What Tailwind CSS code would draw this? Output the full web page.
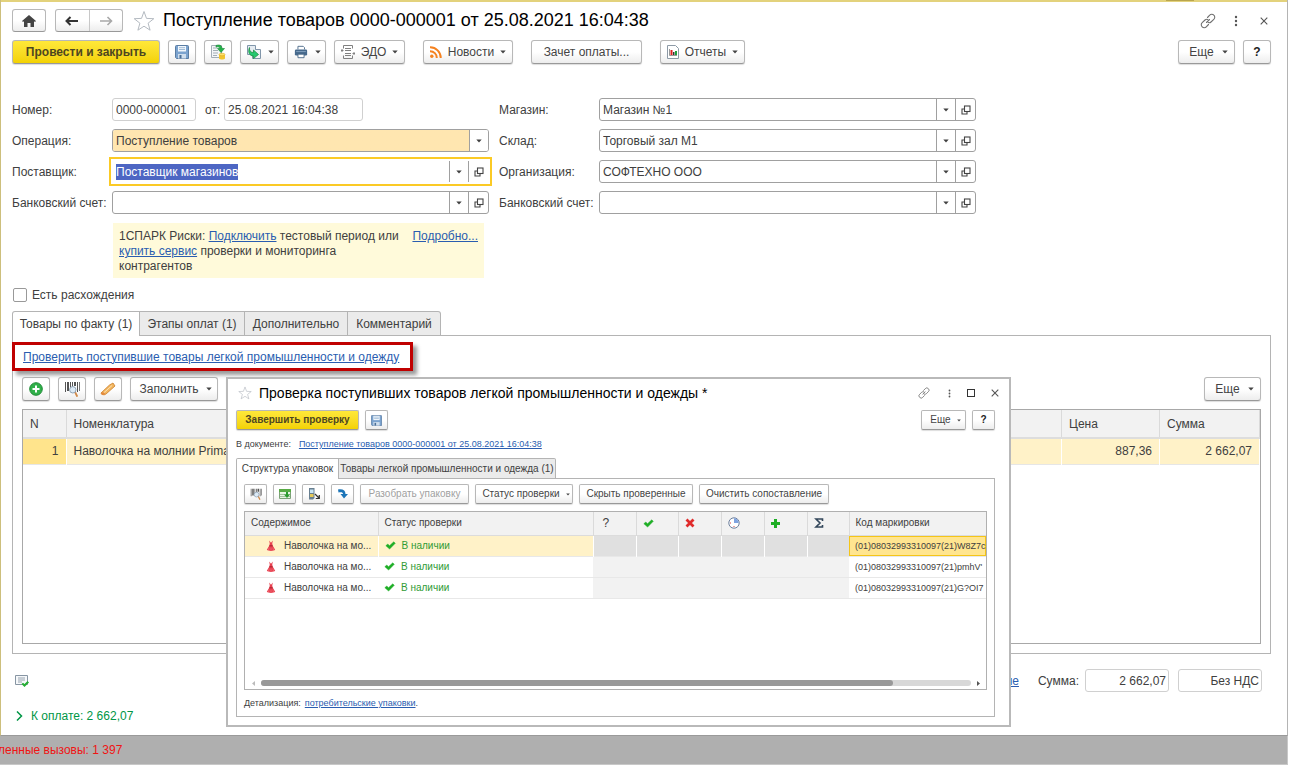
<!DOCTYPE html>
<html lang="ru">

<head>
    <meta charset="UTF-8">
    <meta name="viewport" content="width=device-width, initial-scale=1.0">
    <title>Поступление товаров</title>
    <script src="https://cdn.jsdelivr.net/npm/@tailwindcss/browser@4"></script>
</head>

<body class="bg-white font-['Liberation_Sans',Arial,sans-serif] text-[12px] leading-4 text-[#404040]">

    <!-- Иконки -->
    <svg class="hidden">
        <symbol id="i-caret" viewBox="0 0 6 4"><path d="M.3.5h5.400L3 3.500z" fill="currentColor" /></symbol>
        <symbol id="i-star" viewBox="0 0 22 22"><path d="M11 1.500l2.500 6.900 7.300.3-5.700 4.500 2 7-6.100-4-6.100 4 2-7L1.200 8.700l7.300-.3z" fill="#fff" stroke="#b4bac1" stroke-width="1" /></symbol>
        <symbol id="i-link" viewBox="0 0 16 16"><g fill="none" stroke="#707070" stroke-width="1.100" stroke-linecap="round"><path d="M7.500 4.500l2.200-2.300a2.700 2.700 0 0 1 4.100 0 2.700 2.700 0 0 1 0 4.100L11 9a2.700 2.700 0 0 1-2.800.6" /><path d="M8.500 11.500l-2.200 2.300a2.700 2.700 0 0 1-4.100 0 2.700 2.700 0 0 1 0-4.100L5 7a2.700 2.700 0 0 1 2.800-.6" /><path d="M6.500 9.500l3-3" /></g></symbol>
        <symbol id="i-dots" viewBox="0 0 4 12"><g fill="#555"><circle cx="2" cy="2" r="1.200" /><circle cx="2" cy="6" r="1.200" /><circle cx="2" cy="10" r="1.200" /></g></symbol>
        <symbol id="i-close" viewBox="0 0 8 8"><path d="M.7.7l6.600 6.600M7.300.7L.7 7.300" stroke="#555" stroke-width="1.100" fill="none" /></symbol>
        <symbol id="i-open" viewBox="0 0 10 10"><g fill="none" stroke="#444" stroke-width="1.100"><rect x="3.500" y="1" width="5.500" height="5.500" /><path d="M3.500 4H1v5h5V6.500" /></g></symbol>
        <symbol id="i-save" viewBox="0 0 14 14"><path d="M.5 1.500a1 1 0 0 1 1-1h11a1 1 0 0 1 1 1v12h-12l-1-1z" fill="#7ba3cf" stroke="#5a7da3" /><rect x="3" y="1" width="8" height="5.500" fill="#f2f7fc" /><path d="M4 2.700h6M4 4.500h6" stroke="#9fbbd6" /><rect x="3" y="9" width="8" height="4.500" fill="#cfdeed" /><rect x="4.500" y="10" width="2" height="3.500" fill="#4a6f98" /></symbol>
        <symbol id="i-scan" viewBox="0 0 16 16"><g fill="#555"><path d="M1 1h1v10H1zM3 1h2v9H3zM6 1h1v7H6zM8 1h1v5H8zM10 1h2v4h-2zM13 1h1v10h-1zM15 1h.8v9H15z" /></g><path d="M11 11l2 4" stroke="#d08a4a" stroke-width="1.800" stroke-linecap="round" /><circle cx="8.800" cy="8.800" r="3.200" fill="#dceaf6" stroke="#8fa3b5" /></symbol>
        <symbol id="i-check" viewBox="0 0 12 10"><path d="M.8 5.200L3 3.300l1.900 1.900L9.600.9l1.700 1.700L5 9z" fill="#1eae25" stroke="#1eae25" stroke-width=".5" stroke-linejoin="round" /></symbol>
        <symbol id="i-dress" viewBox="0 0 12 14"><path d="M3.800.5L4.500 4l-.5 2.500L1 11.500c1.500 1.800 8.500 1.800 10 0L8 6.500 7.500 4 8.200.5 6 3.200z" fill="#e8404f" /><path d="M4 6.200h4v1.200H4z" fill="#a02230" /><path d="M3.800 9l-1 3M6 9v3.500M8.200 9l1 3" stroke="#f27883" stroke-width=".7" /></symbol>
    </svg>

    <div class="flex min-h-screen flex-col">

        <!-- Основная форма -->
        <main class="relative mr-px flex flex-1 flex-col border-r border-b border-l border-r-[#b4b4b4] border-b-[#9a9a9a] border-l-[#cdbf7c]">
            <div class="flex h-0.5 justify-end bg-[#e3d27c] pr-[93px]"><i class="h-px w-7 bg-[#b9a54e]"></i></div>

            <div class="flex flex-1 flex-col pt-[7px] pr-4 pb-[11px] pl-[11px]">

                <!-- Заголовок -->
                <header class="flex h-[23px] items-center">
                    <button aria-label="Домой" class="flex h-full w-[34px] items-center justify-center rounded-[3px] border border-[#b8b8b8] border-b-[#999] bg-linear-to-b from-white from-50% to-[#ededed]">
                        <svg class="h-3 w-3.5" viewBox="0 0 14 12"><path d="M7 0l7 6-1 1-1-.8V12H8.500V8h-3v4H2V6.200L1 7 0 6z" fill="#444" /></svg>
                    </button>
                    <div class="ml-[9px] flex h-full w-[68px] rounded-[3px] border border-[#b8b8b8] border-b-[#999] bg-linear-to-b from-white from-50% to-[#ededed]">
                        <button aria-label="Назад" class="flex flex-1 items-center justify-center border-r border-[#c8c8c8]">
                            <svg class="h-2.5 w-3.5" viewBox="0 0 14 10"><path d="M13 5H2M5.500 1L1.500 5l4 4" stroke="#333" stroke-width="2" fill="none" /></svg>
                        </button>
                        <button aria-label="Вперед" class="flex flex-1 items-center justify-center">
                            <svg class="h-2.5 w-3.5" viewBox="0 0 14 10"><path d="M1 5h11M8.500 1l4 4-4 4" stroke="#a8a8a8" stroke-width="1.600" fill="none" /></svg>
                        </button>
                    </div>
                    <button aria-label="В избранное" class="ml-2.5"><svg class="size-[22px]"><use href="#i-star" /></svg></button>
                    <h1 class="ml-2 text-[18px] leading-[23px] text-black">Поступление товаров 0000-000001 от 25.08.2021 16:04:38</h1>
                    <div class="ml-auto flex items-center gap-[18px] pr-[3px]">
                        <button aria-label="Ссылка"><svg class="size-4"><use href="#i-link" /></svg></button>
                        <button aria-label="Меню"><svg class="h-3 w-1"><use href="#i-dots" /></svg></button>
                        <button aria-label="Закрыть" class="ml-1"><svg class="size-2"><use href="#i-close" /></svg></button>
                    </div>
                </header>

                <!-- Командная панель -->
                <div class="mt-2 flex h-6 gap-2 text-[#444] *:rounded-[3px] *:border *:border-[#b8b8b8] *:border-b-[#999] *:shadow-[0_1px_1px_#ddd]">
                    <button class="w-[148px] border-[#b79c10] bg-linear-to-b from-[#ffe838] to-[#f3d200] font-bold text-[#4d4620]">Провести и закрыть</button>
                    <button aria-label="Записать" class="flex w-7 items-center justify-center bg-linear-to-b from-white from-50% to-[#ededed]"><svg class="size-3.5"><use href="#i-save" /></svg></button>
                    <button aria-label="Провести" class="flex w-7 items-center justify-center bg-linear-to-b from-white from-50% to-[#ededed]">
                        <svg class="size-4" viewBox="0 0 16 16"><path d="M1.500 1.500h10v12h-10z" fill="#f4f6f8" stroke="#a3adb6" /><path d="M3 4h4M3 6.500h5M3 9h5M3 11.500h4" stroke="#a3adb6" /><path d="M6 1.500c4-1.500 6 .5 6 3h2.500L11 8.500 7.500 4.500H10C9.500 3 8 2.500 6 3z" fill="#25b34b" stroke="#158a35" stroke-width=".6" /><path d="M9 10.500v4c1 1.400 5 1.400 6 0v-4" fill="#f2c530" /><ellipse cx="12" cy="10.500" rx="3" ry="1.300" fill="#ffe16b" stroke="#d7a318" stroke-width=".5" /></svg>
                    </button>
                    <button aria-label="Создать на основании" class="flex w-[39px] items-center justify-center gap-1.5 bg-linear-to-b from-white from-50% to-[#ededed]">
                        <svg class="size-4" viewBox="0 0 16 16"><path d="M1.500 1.500h8v9h-8z" fill="#e6ecf2" stroke="#8196aa" /><path d="M9.500 5.500h5v9h-8v-4" fill="#eef2f6" stroke="#8196aa" /><path d="M3.500 3.500C3 7 5 8.500 7.500 8.500V6l5 4.500-5 4V12C3.500 12 1.500 8 3.500 3.500z" fill="#25c870" stroke="#128a3a" stroke-width=".7" /></svg>
                        <svg class="h-1 w-1.5"><use href="#i-caret" /></svg>
                    </button>
                    <button aria-label="Печать" class="flex w-[39px] items-center justify-center gap-1.5 bg-linear-to-b from-white from-50% to-[#ededed]">
                        <svg class="h-3.5 w-4" viewBox="0 0 16 16"><path d="M4.500 5V1.500h6l1.500 1.500v2" fill="#fff" stroke="#456585" /><rect x="1" y="5" width="14" height="7" rx="1.500" fill="#46698c" /><path d="M2.500 7.500h11" stroke="#89a7c4" /><path d="M4.500 10.500h7v4h-7z" fill="#fff" stroke="#456585" /></svg>
                        <svg class="h-1 w-1.5"><use href="#i-caret" /></svg>
                    </button>
                    <button class="flex w-[71px] items-center justify-center gap-1.5 bg-linear-to-b from-white from-50% to-[#ededed]">
                        <svg class="size-3.5" viewBox="0 0 14 14"><path d="M2.500 3.500v-3h9v3M2.500 10.500v3h9v-3M4 3.500h6M4 5.500h6M4 8.500h6M4 10.500h6M0 5.500h2.500M1.500 4L0 5.500 1.500 7M11.500 8.500H14M12.500 7L14 8.500 12.500 10" fill="none" stroke="#808080" /></svg>
                        ЭДО
                        <svg class="h-1 w-1.5"><use href="#i-caret" /></svg>
                    </button>
                    <button class="ml-2.5 flex w-[90px] items-center justify-center gap-1.5 bg-linear-to-b from-white from-50% to-[#ededed]">
                        <svg class="size-3" viewBox="0 0 12 12"><g fill="none" stroke="#f58220" stroke-width="2"><path d="M0 1.300A10.500 10.500 0 0 1 10.700 12M0 5.200A6.700 6.700 0 0 1 6.800 12" /></g><circle cx="1.800" cy="10.200" r="1.700" fill="#f58220" /></svg>
                        Новости
                        <svg class="h-1 w-1.5"><use href="#i-caret" /></svg>
                    </button>
                    <button class="ml-2.5 w-[111px] bg-linear-to-b from-white from-50% to-[#ededed]">Зачет оплаты...</button>
                    <button class="ml-2.5 flex w-[85px] items-center justify-center gap-1.5 bg-linear-to-b from-white from-50% to-[#ededed]">
                        <svg class="h-3.5 w-3" viewBox="0 0 12 14"><path d="M.5.500h8l3 3v10H.5z" fill="#fff" stroke="#8d9aa6" /><path d="M2.500 4v6.500H10" stroke="#999" fill="none" /><path d="M3.500 5h2v5h-2z" fill="#e02020" /><path d="M6 7h1.500v3H6z" fill="#333" /><path d="M8 6h2v4H8z" fill="#1fa03a" /></svg>
                        Отчеты
                        <svg class="h-1 w-1.5"><use href="#i-caret" /></svg>
                    </button>
                    <button class="ml-auto flex w-[57px] items-center justify-center gap-2 bg-linear-to-b from-white from-50% to-[#ededed] pl-1">Еще <svg class="h-1 w-1.5"><use href="#i-caret" /></svg></button>
                    <button aria-label="Справка" class="w-7 bg-linear-to-b from-white from-50% to-[#ededed] font-bold text-[#222]">?</button>
                </div>

                <!-- Реквизиты -->
                <div class="mt-[34px] grid grid-cols-[477px_477px] items-start gap-x-2.5">
                    <div class="flex flex-col gap-2">
                        <div class="flex h-[23px] items-center">
                            <label for="number" class="w-[100px]">Номер:</label>
                            <input id="number" value="0000-000001" class="h-full w-[84px] rounded-[3px] border border-[#d0d0d0] px-[3px]">
                            <label for="date" class="w-7 pl-[9px]">от:</label>
                            <input id="date" value="25.08.2021 16:04:38" class="h-full w-[139px] rounded-[3px] border border-[#d0d0d0] px-[3px]">
                        </div>
                        <div class="flex h-[23px] items-center">
                            <label for="operation" class="w-[100px]">Операция:</label>
                            <div class="relative flex h-full flex-1 rounded-[3px] border border-[#a0a0a0]">
                                <select id="operation" class="flex-1 appearance-none rounded-[2px] bg-linear-to-l from-white from-[18px] to-[#ffe6b0] to-[18px] px-[3px]">
                                    <option>Поступление товаров</option>
                                </select>
                                <span class="pointer-events-none absolute inset-y-0 right-0 flex w-[19px] items-center justify-center border-l border-[#a0a0a0]"><svg class="h-1 w-1.5"><use href="#i-caret" /></svg></span>
                            </div>
                        </div>
                        <div class="flex h-[23px] items-center">
                            <label for="supplier" class="w-[100px]">Поставщик:</label>
                            <div class="flex h-full flex-1 border border-white outline-2 outline-offset-1 outline-[#fbca25]">
                                <input id="supplier" value="Поставщик магазинов" class="min-w-0 flex-1 px-[3px] outline-none selection:bg-[#4d66c3] selection:text-white">
                                <button aria-label="Выбрать" class="flex w-[19px] items-center justify-center border-l border-[#a0a0a0]"><svg class="h-1 w-1.5"><use href="#i-caret" /></svg></button>
                                <button aria-label="Открыть" class="flex w-5 items-center justify-center border-l border-[#a0a0a0]"><svg class="size-2.5"><use href="#i-open" /></svg></button>
                            </div>
                        </div>
                        <div class="flex h-[23px] items-center">
                            <label for="account" class="w-[100px] whitespace-nowrap">Банковский счет:</label>
                            <div class="flex h-full flex-1 rounded-[3px] border border-[#a0a0a0]">
                                <input id="account" class="min-w-0 flex-1 px-[3px] outline-none">
                                <button aria-label="Выбрать" class="flex w-[19px] items-center justify-center border-l border-[#a0a0a0]"><svg class="h-1 w-1.5"><use href="#i-caret" /></svg></button>
                                <button aria-label="Открыть" class="flex w-5 items-center justify-center border-l border-[#a0a0a0]"><svg class="size-2.5"><use href="#i-open" /></svg></button>
                            </div>
                        </div>

                        <!-- 1СПАРК Риски -->
                        <div class="mt-px ml-[101px] flex w-[371px] justify-between bg-[#fffada] pt-1.5 pr-1.5 pb-1 pl-1.5 leading-[15px]">
                            <p class="w-[285px]">1СПАРК Риски: <a href="#" class="text-[#2a5db0] underline">Подключить</a> тестовый период или <a href="#" class="text-[#2a5db0] underline">купить сервис</a> проверки и мониторинга<br>контрагентов</p>
                            <a href="#" class="text-[#2a5db0] underline">Подробно...</a>
                        </div>
                    </div>

                    <div class="flex flex-col gap-2">
                        <div class="flex h-[23px] items-center">
                            <label for="shop" class="w-[100px]">Магазин:</label>
                            <div class="flex h-full flex-1 rounded-[3px] border border-[#a0a0a0]">
                                <input id="shop" value="Магазин №1" class="min-w-0 flex-1 px-[3px] outline-none">
                                <button aria-label="Выбрать" class="flex w-[19px] items-center justify-center border-l border-[#a0a0a0]"><svg class="h-1 w-1.5"><use href="#i-caret" /></svg></button>
                                <button aria-label="Открыть" class="flex w-5 items-center justify-center border-l border-[#a0a0a0]"><svg class="size-2.5"><use href="#i-open" /></svg></button>
                            </div>
                        </div>
                        <div class="flex h-[23px] items-center">
                            <label for="store" class="w-[100px]">Склад:</label>
                            <div class="flex h-full flex-1 rounded-[3px] border border-[#a0a0a0]">
                                <input id="store" value="Торговый зал М1" class="min-w-0 flex-1 px-[3px] outline-none">
                                <button aria-label="Выбрать" class="flex w-[19px] items-center justify-center border-l border-[#a0a0a0]"><svg class="h-1 w-1.5"><use href="#i-caret" /></svg></button>
                                <button aria-label="Открыть" class="flex w-5 items-center justify-center border-l border-[#a0a0a0]"><svg class="size-2.5"><use href="#i-open" /></svg></button>
                            </div>
                        </div>
                        <div class="flex h-[23px] items-center">
                            <label for="org" class="w-[100px]">Организация:</label>
                            <div class="flex h-full flex-1 rounded-[3px] border border-[#a0a0a0]">
                                <input id="org" value="СОФТЕХНО ООО" class="min-w-0 flex-1 px-[3px] outline-none">
                                <button aria-label="Выбрать" class="flex w-[19px] items-center justify-center border-l border-[#a0a0a0]"><svg class="h-1 w-1.5"><use href="#i-caret" /></svg></button>
                                <button aria-label="Открыть" class="flex w-5 items-center justify-center border-l border-[#a0a0a0]"><svg class="size-2.5"><use href="#i-open" /></svg></button>
                            </div>
                        </div>
                        <div class="flex h-[23px] items-center">
                            <label for="orgaccount" class="w-[100px] whitespace-nowrap">Банковский счет:</label>
                            <div class="flex h-full flex-1 rounded-[3px] border border-[#a0a0a0]">
                                <input id="orgaccount" class="min-w-0 flex-1 px-[3px] outline-none">
                                <button aria-label="Выбрать" class="flex w-[19px] items-center justify-center border-l border-[#a0a0a0]"><svg class="h-1 w-1.5"><use href="#i-caret" /></svg></button>
                                <button aria-label="Открыть" class="flex w-5 items-center justify-center border-l border-[#a0a0a0]"><svg class="size-2.5"><use href="#i-open" /></svg></button>
                            </div>
                        </div>
                    </div>
                </div>

                <label class="mt-[9px] flex items-center gap-[5px] pl-px"><input type="checkbox" class="size-3.5 appearance-none rounded-[2px] border border-[#999] bg-white">Есть расхождения</label>

                <!-- Закладки -->
                <div class="z-10 mt-2 flex h-[25px] *:border-t *:border-r *:border-[#b4b4b4]">
                    <button class="w-[128px] rounded-tl-[3px] border-l bg-white">Товары по факту (1)</button>
                    <button class="w-[105px] border-b bg-[#ebebeb]">Этапы оплат (1)</button>
                    <button class="w-[103px] border-b bg-[#ebebeb]">Дополнительно</button>
                    <button class="w-[93px] rounded-tr-[3px] border-b bg-[#ebebeb]">Комментарий</button>
                </div>
                <section class="-mt-px flex flex-1 flex-col border border-[#b4b4b4] pt-1.5 pb-[9px]">
                    <div class="z-10 -ml-px flex h-[29px] w-[401px] items-center border-3 border-[#c00000] pl-2 shadow-[4px_4px_4px_#0006]">
                        <a href="#" class="text-[#2a5db0] underline">Проверить поступившие товары легкой промышленности и одежду</a>
                    </div>

                    <div class="mt-1.5 flex h-6 gap-2 px-[9px] text-[#444] *:rounded-[3px] *:border *:border-[#b8b8b8] *:border-b-[#999] *:bg-linear-to-b *:from-white *:from-50% *:to-[#ededed] *:shadow-[0_1px_1px_#ddd]">
                        <button aria-label="Добавить" class="flex w-7 items-center justify-center"><svg class="size-3.5" viewBox="0 0 14 14"><circle cx="7" cy="7" r="6.300" fill="#30b04a" stroke="#208a37" /><path d="M7 3.500v7M3.500 7h7" stroke="#fff" stroke-width="2" /></svg></button>
                        <button aria-label="Штрихкод" class="flex w-7 items-center justify-center"><svg class="size-4"><use href="#i-scan" /></svg></button>
                        <button aria-label="Изменить" class="flex w-7 items-center justify-center"><svg class="size-4" viewBox="0 0 16 16"><path d="M1 12L9.500 4l3.500-2 2 3-9 8c-1.500 1.300-5 1-5-1z" fill="#f3b65f" stroke="#c97f2c" stroke-width=".8" /><path d="M3.500 12L12 4.500" stroke="#fbe1b4" /><path d="M1 12c1-1.500 4-1 4 1.500-2 .8-4 .2-4-1.500z" fill="#e58a3d" /></svg></button>
                        <button class="flex w-[88px] items-center justify-center gap-2 pl-1">Заполнить <svg class="h-1 w-1.5"><use href="#i-caret" /></svg></button>
                        <button class="w-[60px]" aria-label="Подбор"></button>
                        <button class="ml-auto flex w-[57px] items-center justify-center gap-2 pl-1">Еще <svg class="h-1 w-1.5"><use href="#i-caret" /></svg></button>
                    </div>

                    <!-- Список товаров -->
                    <div class="mx-[9px] mt-2 flex-1 border border-[#a8a8a8]">
                        <table class="w-full table-fixed">
                            <colgroup>
                                <col class="w-[43px]">
                                <col>
                                <col class="w-[98px]">
                                <col class="w-[100px]">
                            </colgroup>
                            <thead>
                                <tr class="h-7 border-b-2 border-[#ddd] bg-[#f2f2f2] text-left *:border-r *:border-[#dadada] *:px-[7px] *:font-normal">
                                    <th>N</th>
                                    <th>Номенклатура</th>
                                    <th>Цена</th>
                                    <th>Сумма</th>
                                </tr>
                            </thead>
                            <tbody>
                                <tr class="h-[26px] border-b border-[#e6e6e6] bg-[#fff2c8] *:border-r *:border-white *:px-[7px]">
                                    <td class="bg-[#ffe48c] text-right">1</td>
                                    <td>Наволочка на молнии Primavelle</td>
                                    <td class="text-right">887,36</td>
                                    <td class="text-right">2 662,07</td>
                                </tr>
                            </tbody>
                        </table>
                    </div>
                </section>

                <!-- Итоги -->
                <div class="mt-[15px] flex h-[23px] items-center pr-[9px]">
                    <svg class="ml-[3px] size-3.5" viewBox="0 0 14 14"><path d="M.5 1.500h12v9H.500z" fill="#f6f8fa" stroke="#8795a3" /><path d="M3 4h7M3 6h7M3 8h4" stroke="#98a4b0" /><path d="M6.500 10l1.500-1.300L9.500 10 12.500 7 14 8.500 9.500 13z" fill="#25ad35" /></svg>
                    <a href="#" class="ml-auto text-[#2a5db0] underline">ые</a>
                    <label for="total" class="mr-1.5 ml-[19px]">Сумма:</label>
                    <input id="total" value="2 662,07" class="h-full w-[84px] rounded-[3px] border border-[#d0d0d0] px-0.5 text-right">
                    <input aria-label="НДС" value="Без НДС" class="ml-[9px] h-full w-[84px] rounded-[3px] border border-[#d0d0d0] px-0.5 text-right">
                </div>
                <button class="mt-4 flex items-center gap-2 pl-1 text-[#009646]">
                    <svg class="h-2.5 w-[7px]" viewBox="0 0 7 10"><path d="M1 .5L5.500 5 1 9.500" fill="none" stroke="#009646" stroke-width="1.500" /></svg>
                    К оплате: 2 662,07
                </button>
            </div>

            <!-- Окно проверки товаров -->
            <div role="dialog" aria-labelledby="check-title" class="absolute top-[377px] left-[225px] z-20 flex h-[350px] w-[785px] flex-col border-2 border-[#b9b9b9] bg-white px-2 pb-2 text-[10px] leading-3">
                <div class="mt-1 flex h-5 items-center">
                    <button aria-label="В избранное" class="pl-0.5"><svg class="size-3.5"><use href="#i-star" /></svg></button>
                    <h2 id="check-title" class="ml-[7px] text-[14px] leading-5 text-black">Проверка поступивших товаров легкой промышленности и одежды *</h2>
                    <div class="ml-auto flex items-center gap-4 pr-0.5">
                        <button aria-label="Ссылка" class="mr-0.5"><svg class="size-3"><use href="#i-link" /></svg></button>
                        <button aria-label="Меню"><svg class="h-[9px] w-[3px]"><use href="#i-dots" /></svg></button>
                        <button aria-label="Развернуть" class="size-2 border border-[#333]"></button>
                        <button aria-label="Закрыть"><svg class="size-2"><use href="#i-close" /></svg></button>
                    </div>
                </div>

                <div class="mt-[7px] flex h-5 gap-1.5 pr-[6px] text-[#444] *:rounded-[2px] *:border *:border-[#b8b8b8] *:border-b-[#999] *:shadow-[0_1px_1px_#ddd]">
                    <button class="w-[123px] border-[#b79c10] bg-linear-to-b from-[#ffe838] to-[#f3d200] font-bold text-[#4d4620]">Завершить проверку</button>
                    <button aria-label="Записать" class="flex w-[23px] items-center justify-center bg-linear-to-b from-white from-50% to-[#ededed]"><svg class="size-[11px]"><use href="#i-save" /></svg></button>
                    <button class="ml-auto flex w-[45px] items-center justify-center gap-1.5 bg-linear-to-b from-white from-50% to-[#ededed] pl-1">Еще <svg class="h-[3px] w-1"><use href="#i-caret" /></svg></button>
                    <button aria-label="Справка" class="w-[23px] bg-linear-to-b from-white from-50% to-[#ededed] font-bold text-[#222]">?</button>
                </div>

                <p class="mt-2 flex gap-2 text-[9px]">В документе: <a href="#" class="text-[#2a5db0] underline">Поступление товаров 0000-000001 от 25.08.2021 16:04:38</a></p>

                <div class="z-10 mt-2 flex h-[21px] *:border-t *:border-r *:border-[#b4b4b4]">
                    <button class="w-[103px] rounded-tl-[2px] border-l bg-white">Структура упаковок</button>
                    <button class="w-[217px] rounded-tr-[2px] border-b bg-[#ebebeb]">Товары легкой промышленности и одежда (1)</button>
                </div>
                <section class="-mt-px mr-1.5 flex flex-1 flex-col border border-[#b4b4b4] px-[7px] pt-[5px] pb-[7px]">
                    <div class="flex h-5 gap-1.5 text-[#444] *:rounded-[2px] *:border *:border-[#b8b8b8] *:border-b-[#999] *:bg-linear-to-b *:from-white *:from-50% *:to-[#ededed] *:shadow-[0_1px_1px_#ddd]">
                        <button aria-label="Штрихкод" class="flex w-[23px] items-center justify-center"><svg class="size-3"><use href="#i-scan" /></svg></button>
                        <button aria-label="Загрузить" class="flex w-[23px] items-center justify-center"><svg class="h-2.5 w-3" viewBox="0 0 12 10"><path d="M.5.500h11v9H.5z" fill="#e8f5e3" stroke="#7ba276" /><path d="M0 0h12v3H0z" fill="#58ab45" /><path d="M1 5.500h10M1 7.500h10" stroke="#a2c29b" /><path d="M7 3h2v2.500h2L8 9 5 5.500h2z" fill="#2a9b2f" /></svg></button>
                        <button aria-label="Терминал" class="flex w-[23px] items-center justify-center"><svg class="size-3" viewBox="0 0 12 12"><path d="M1 0h5.500v10L5 11.500H1z" fill="#687f90" /><path d="M2 1.500h3.500V5H2z" fill="#c9e6f7" /><path d="M2 6h3.500v3H2z" fill="#e5c95a" /><path d="M7 6l4 4M11.300 7v3.500H7.800" stroke="#333" stroke-width="1.200" fill="none" /></svg></button>
                        <button aria-label="Обновить" class="flex w-[23px] items-center justify-center"><svg class="size-2.5" viewBox="0 0 10 10"><path d="M0 .5c5-.8 7.500 1 7.500 4.500H10L6 9.500 2.500 5H5C5 3.500 3.500 2.800.5 3.500z" fill="#1d75b8" /></svg></button>
                        <button disabled class="w-[109px] text-[#a0a0a0]">Разобрать упаковку</button>
                        <button class="flex w-[98px] items-center justify-center gap-1.5 pl-1">Статус проверки <svg class="h-[3px] w-1"><use href="#i-caret" /></svg></button>
                        <button class="w-[114px]">Скрыть проверенные</button>
                        <button class="w-[130px]">Очистить сопоставление</button>
                    </div>

                    <!-- Структура упаковок -->
                    <div class="mt-[7px] flex flex-1 flex-col overflow-hidden border border-[#b0b0b0]">
                        <table class="w-full table-fixed whitespace-nowrap">
                            <colgroup>
                                <col class="w-[133px]">
                                <col class="w-[215px]">
                                <col class="w-[43px]">
                                <col class="w-[42px]">
                                <col class="w-[43px]">
                                <col class="w-[43px]">
                                <col class="w-[43px]">
                                <col class="w-[42px]">
                                <col>
                            </colgroup>
                            <thead>
                                <tr class="h-[23px] border-b border-[#dcdcdc] bg-[#f2f2f2] text-left *:border-r *:border-[#dadada] *:px-1.5 *:font-normal">
                                    <th>Содержимое</th>
                                    <th>Статус проверки</th>
                                    <th class="pl-[9px]! text-[12px]">?</th>
                                    <th><svg class="h-[9px] w-[11px]"><use href="#i-check" /></svg></th>
                                    <th><svg class="size-2.5" viewBox="0 0 10 10"><path d="M1.500 1.500l7 7M8.500 1.500l-7 7" stroke="#e02b2b" stroke-width="2.800" /></svg></th>
                                    <th><svg class="size-3" viewBox="0 0 12 12"><circle cx="6" cy="6" r="5.200" fill="#fff" stroke="#6d7f9c" /><path d="M6 6V1.300A4.700 4.700 0 0 1 10.700 6z" fill="#7fa3e0" /><path d="M2 6h1M6 9v1" stroke="#d44" /></svg></th>
                                    <th><svg class="size-[9px]" viewBox="0 0 9 9"><path d="M4.500 0v9M0 4.500h9" stroke="#1eae25" stroke-width="3" /></svg></th>
                                    <th><svg class="size-2.5" viewBox="0 0 10 10"><path d="M8.500 3V1H2l4 4-4 4h6.500V7" stroke="#33475b" stroke-width="1.600" fill="none" /></svg></th>
                                    <th class="border-r-0!">Код маркировки</th>
                                </tr>
                            </thead>
                            <tbody>
                                <tr class="h-[21px] border-b border-[#e8e8e8] *:px-1.5">
                                    <td class="border-r border-white bg-[#fff2c8]"><span class="flex items-center gap-2 pl-[15px]"><svg class="h-3 w-2.5"><use href="#i-dress" /></svg>Наволочка на мо...</span></td>
                                    <td class="bg-[#fff2c8] text-[#2f9b36]"><span class="flex items-center gap-1.5"><svg class="h-[9px] w-[11px]"><use href="#i-check" /></svg>В наличии</span></td>
                                    <td class="border-l border-white bg-[#e0e0e0]"></td>
                                    <td class="border-l border-white bg-[#e0e0e0]"></td>
                                    <td class="border-l border-white bg-[#e0e0e0]"></td>
                                    <td class="border-l border-white bg-[#e0e0e0]"></td>
                                    <td class="border-l border-white bg-[#e0e0e0]"></td>
                                    <td class="border-l border-white bg-[#e0e0e0]"></td>
                                    <td class="overflow-hidden bg-[#ffe590] text-[9px] inset-ring-1 inset-ring-[#f5c518]">(01)08032993310097(21)W8Z7c</td>
                                </tr>
                                <tr class="h-[21px] border-b border-[#e8e8e8] *:px-1.5">
                                    <td><span class="flex items-center gap-2 pl-[15px]"><svg class="h-3 w-2.5"><use href="#i-dress" /></svg>Наволочка на мо...</span></td>
                                    <td class="text-[#2f9b36]"><span class="flex items-center gap-1.5"><svg class="h-[9px] w-[11px]"><use href="#i-check" /></svg>В наличии</span></td>
                                    <td colspan="6" class="bg-[#f2f2f2]"></td>
                                    <td class="overflow-hidden text-[9px]">(01)08032993310097(21)pmhV'</td>
                                </tr>
                                <tr class="h-[21px] border-b border-[#e8e8e8] *:px-1.5">
                                    <td><span class="flex items-center gap-2 pl-[15px]"><svg class="h-3 w-2.5"><use href="#i-dress" /></svg>Наволочка на мо...</span></td>
                                    <td class="text-[#2f9b36]"><span class="flex items-center gap-1.5"><svg class="h-[9px] w-[11px]"><use href="#i-check" /></svg>В наличии</span></td>
                                    <td colspan="6" class="bg-[#f2f2f2]"></td>
                                    <td class="overflow-hidden text-[9px]">(01)08032993310097(21)G?OI7</td>
                                </tr>
                            </tbody>
                        </table>

                        <!-- Прокрутка -->
                        <div class="mt-auto flex h-3 items-center gap-1.5 pr-1.5 pl-[7px]">
                            <svg class="h-[5px] w-[3px]" viewBox="0 0 3 5"><path d="M3 0v5L0 2.500z" fill="#bbb" /></svg>
                            <div class="h-1.5 flex-1 rounded-full bg-[#d8d8d8]"><div class="h-full w-[89%] rounded-full bg-[#999]"></div></div>
                            <svg class="h-[5px] w-[3px]" viewBox="0 0 3 5"><path d="M0 0v5l3-2.500z" fill="#555" /></svg>
                        </div>
                    </div>

                    <p class="mt-[7px] flex text-[9px]"><span class="mr-1">Детализация:</span><a href="#" class="text-[#2a5db0] underline">потребительские упаковки</a>.</p>
                </section>
            </div>
        </main>

        <!-- Строка состояния -->
        <footer class="mr-px flex h-[29px] items-center overflow-hidden border-r border-b border-[#c8c8c8] bg-[#afafaf] text-[#f01414]"><span class="-ml-0.5">ленные вызовы: 1 397</span></footer>
    </div>

    <script>
        // Поле поставщика активно при открытии формы
        const supplier = document.getElementById('supplier');
        supplier.focus();
        supplier.select();
    </script>
</body>

</html>
